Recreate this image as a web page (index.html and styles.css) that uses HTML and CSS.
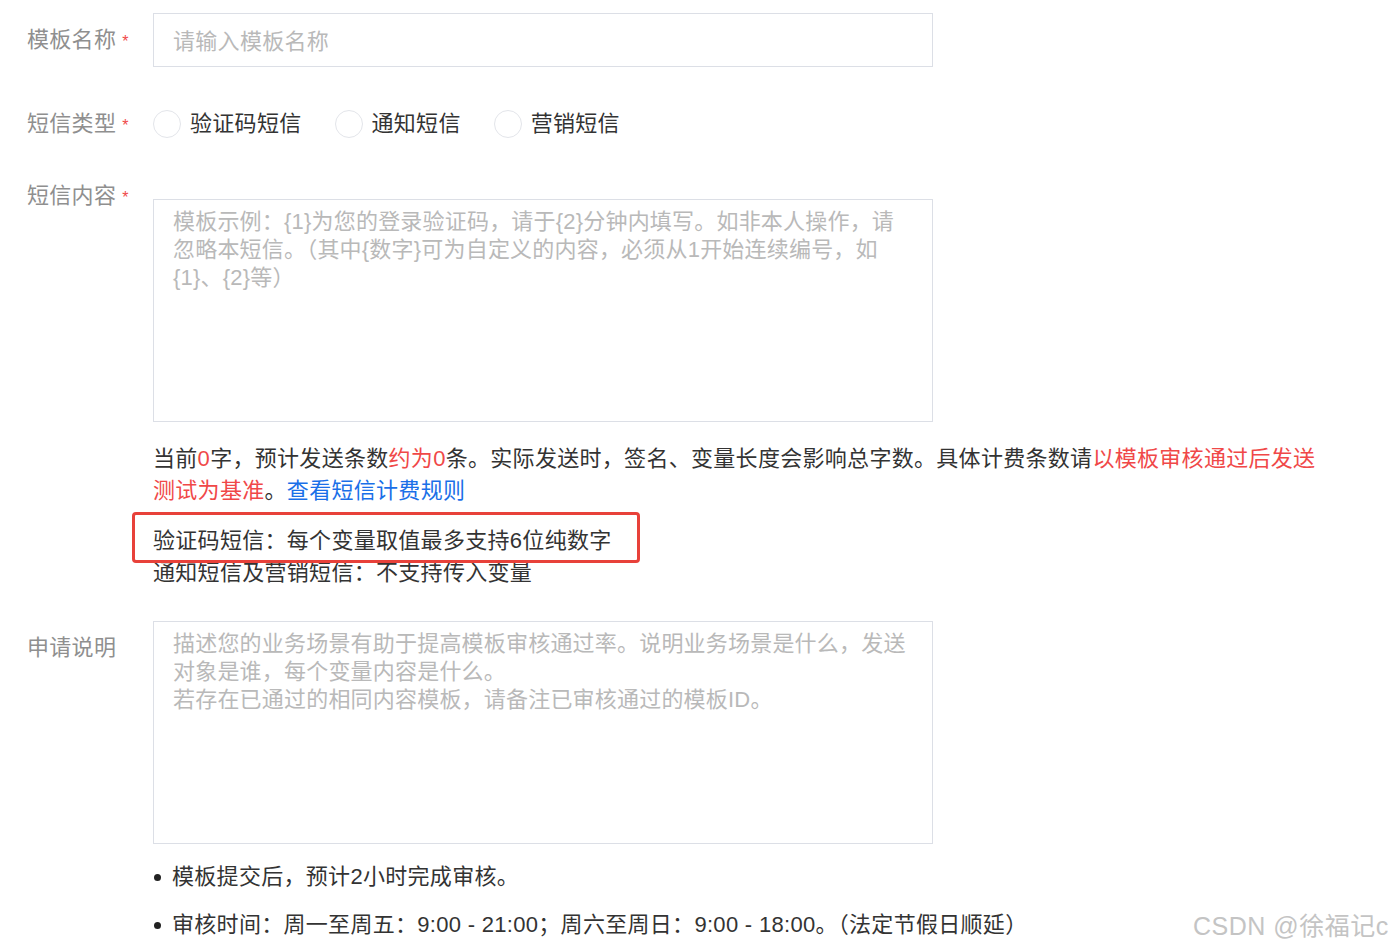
FILE: index.html
```html
<!DOCTYPE html>
<html lang="zh-CN">
<head>
<meta charset="utf-8">
<title>短信模板</title>
<link rel="stylesheet" href="styles.css">
</head>
<body>
<div class="page">
  <div class="row row-name">
    <div class="label">模板名称<span class="star">*</span></div>
    <div class="control">
      <div class="input"><span class="ph">请输入模板名称</span></div>
    </div>
  </div>

  <div class="row row-type">
    <div class="label">短信类型<span class="star">*</span></div>
    <div class="control radios">
      <label class="radio"><span class="circle"></span><span class="rtext">验证码短信</span></label>
      <label class="radio"><span class="circle"></span><span class="rtext">通知短信</span></label>
      <label class="radio"><span class="circle"></span><span class="rtext">营销短信</span></label>
    </div>
  </div>

  <div class="row row-content">
    <div class="label label-top">短信内容<span class="star">*</span></div>
    <div class="control">
      <div class="textarea ta1">
        <div class="ph">模板示例：{1}为您的登录验证码，请于{2}分钟内填写。如非本人操作，请</div>
        <div class="ph">忽略本短信。（其中{数字}可为自定义的内容，必须从1开始连续编号，如</div>
        <div class="ph">{1}、{2}等）</div>
      </div>
      <div class="hint">
        当前<span class="red">0</span>字，预计发送条数<span class="red">约为0</span>条。实际发送时，签名、变量长度会影响总字数。具体计费条数请<span class="red">以模板审核通过后发送</span><br><span class="red">测试为基准</span>。<a class="link" href="#">查看短信计费规则</a>
      </div>
      <div class="rules">
        <div class="rule"><span class="marked">验证码短信：每个变量取值最多支持6位纯数字</span></div>
        <div class="rule">通知短信及营销短信：不支持传入变量</div>
      </div>
    </div>
  </div>

  <div class="row row-desc">
    <div class="label label-desc">申请说明</div>
    <div class="control">
      <div class="textarea ta2">
        <div class="ph">描述您的业务场景有助于提高模板审核通过率。说明业务场景是什么，发送</div>
        <div class="ph">对象是谁，每个变量内容是什么。</div>
        <div class="ph">若存在已通过的相同内容模板，请备注已审核通过的模板ID。</div>
      </div>
      <ul class="notes">
        <li>模板提交后，预计2小时完成审核。</li>
        <li>审核时间：周一至周五：9:00 - 21:00；周六至周日：9:00 - 18:00。（法定节假日顺延）</li>
      </ul>
    </div>
  </div>

  <div class="watermark">CSDN @徐福记c</div>
</div>
</body>
</html>
```

FILE: styles.css
```css
html, body {
  margin: 0;
  padding: 0;
  background: #ffffff;
}

body {
  font-family: "Liberation Sans", "Noto Sans CJK SC", sans-serif;
  font-size: 22px;
  letter-spacing: 0.3px;
  color: #333333;
  width: 1389px;
  height: 949px;
  overflow: hidden;
}

.page {
  position: relative;
  padding: 13px 0 0 27px;
  height: 936px;
  box-sizing: border-box;
}

.row {
  display: grid;
  grid-template-columns: 126px 780px;
}

.label {
  color: #8f8f8f;
  font-size: 22px;
  line-height: 30px;
  white-space: nowrap;
  display: flex;
  align-items: center;
}

.star {
  color: #f04848;
  font-size: 16px;
  margin-left: 6px;
  line-height: 16px;
  position: relative;
  top: 2px;
}

.ph {
  color: #b9b9b9;
  white-space: nowrap;
}

/* Row 1 */
.row-name .label {
  height: 54px;
}

.input {
  height: 54px;
  box-sizing: border-box;
  border: 1px solid #dcdfe6;
  padding: 0 19px 3px;
  display: flex;
  align-items: center;
  font-size: 22px;
}

/* Row 2 */
.row-type {
  margin-top: 43px;
}

.row-type .label {
  height: 28px;
}

.radios {
  display: flex;
  align-items: center;
  height: 28px;
}

.radio {
  display: flex;
  align-items: center;
  margin-right: 33px;
}

.circle {
  width: 26px;
  height: 26px;
  border: 1px solid #e3e5ea;
  border-radius: 50%;
  margin-right: 9px;
}

.rtext {
  color: #333333;
  font-size: 22px;
  line-height: 28px;
}

/* Row 3 */
.row-content {
  margin-top: 43px;
}

.label-top {
  align-self: start;
}

.row-content .control {
  padding-top: 18px;
}

.textarea {
  box-sizing: border-box;
  border: 1px solid #dcdfe6;
  padding: 8px 19px;
  height: 223px;
  font-size: 22px;
  letter-spacing: 0.2px;
  line-height: 28px;
}

.hint {
  margin-top: 21px;
  width: 1190px;
  line-height: 32px;
  font-size: 22px;
  color: #333333;
  white-space: nowrap;
}

.red {
  color: #f04848;
}

.link {
  color: #1a6fe8;
  text-decoration: none;
}

.rules {
  margin-top: 18px;
}

.rule {
  line-height: 32px;
  font-size: 22px;
  color: #333333;
  white-space: nowrap;
}

.marked {
  position: relative;
  display: inline-block;
}

.marked::after {
  content: "";
  position: absolute;
  left: -21px;
  right: -28px;
  top: -13px;
  bottom: -6px;
  border: 3px solid #e8413a;
  border-radius: 4px;
}

/* Row 4 */
.row-desc {
  margin-top: 32px;
}

.label-desc {
  align-self: start;
  padding-top: 12px;
}

.notes {
  list-style: none;
  margin: 17px 0 0;
  padding: 0;
}

.notes li {
  position: relative;
  padding-left: 19px;
  line-height: 32px;
  font-size: 22px;
  color: #333333;
  white-space: nowrap;
  margin-bottom: 16px;
}

.notes li::before {
  content: "";
  position: absolute;
  left: 1px;
  top: 13px;
  width: 7px;
  height: 7px;
  border-radius: 50%;
  background: #222222;
}

.watermark {
  position: absolute;
  left: 1193px;
  top: 910px;
  font-size: 25px;
  letter-spacing: 0.5px;
  line-height: 32px;
  color: #c4c4c4;
  white-space: nowrap;
}
```
